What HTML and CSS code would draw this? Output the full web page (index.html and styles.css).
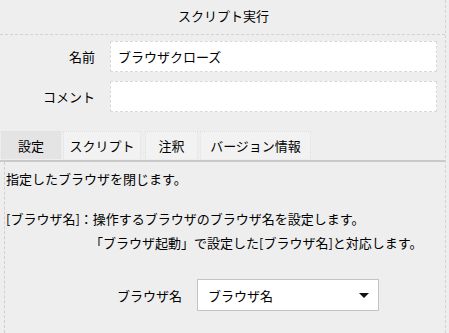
FILE: index.html
```html
<!DOCTYPE html>
<html lang="ja">
<head>
<meta charset="utf-8">
<link rel="stylesheet" href="styles.css">
</head>
<body>
<div class="frame">
  <div class="header">スクリプト実行</div>
  <div class="form">
    <div class="row">
      <label class="label">名前</label>
      <div class="input">ブラウザクローズ</div>
    </div>
    <div class="row">
      <label class="label">コメント</label>
      <div class="input"></div>
    </div>
  </div>
  <div class="tabs">
    <div class="tab active">設定</div>
    <div class="tab">スクリプト</div>
    <div class="tab">注釈</div>
    <div class="tab">バージョン情報</div>
  </div>
  <div class="panel">
    <p class="line">指定したブラウザを閉じます。</p>
    <p class="line gap">[ブラウザ名]：操作するブラウザのブラウザ名を設定します。</p>
    <p class="line indent">「ブラウザ起動」で設定した[ブラウザ名]と対応します。</p>
    <div class="field">
      <span class="field-label">ブラウザ名</span>
      <div class="select">
        <span>ブラウザ名</span>
        <span class="arrow"></span>
      </div>
    </div>
  </div>
</div>
</body>
</html>
```

FILE: styles.css
```css
html, body {
  margin: 0;
  padding: 0;
  background: #eeeeee;
}
body {
  font-family: "Noto Sans CJK JP", "Noto Sans", sans-serif;
  font-size: 13px;
  color: #000;
  width: 449px;
  height: 333px;
  overflow: hidden;
}
.frame {
  width: 446px;
  height: 333px;
  border-right: 1px dashed #d4d4d4;
  box-sizing: border-box;
  display: flex;
  flex-direction: column;
}
.header {
  height: 35px;
  box-sizing: border-box;
  border-bottom: 1px dashed #d2d2d2;
  text-align: center;
  line-height: 32px;
  padding-left: 2px;
}
.form {
  display: flex;
  flex-direction: column;
  gap: 9px;
  padding-top: 6px;
}
.row {
  display: flex;
  align-items: center;
  height: 31px;
}
.label {
  width: 95px;
  text-align: right;
  padding-right: 15px;
  box-sizing: content-box;
}
.input {
  width: 327px;
  height: 31px;
  box-sizing: border-box;
  background: #fff;
  border: 1px dashed #d8d8d8;
  padding-left: 7px;
  line-height: 29px;
}
.tabs {
  display: flex;
  gap: 2px;
  margin-top: 19px;
  height: 29px;
  border-bottom: 2px solid #c9c9c9;
  padding-left: 1px;
}
.tab {
  height: 28px;
  line-height: 28px;
  background: #f2f2f2;
  border: 1px dotted #e0e0e0;
  border-bottom: none;
  box-sizing: border-box;
  text-align: center;
}
.tab.active {
  background: #e4e4e4;
  width: 60px;
}
.tab:nth-child(2) { width: 78px; }
.tab:nth-child(3) { width: 53px; margin-left: 2px; }
.tab:nth-child(4) { width: 111px; }
.panel {
  flex: 1;
  margin-left: 4px;
  border-left: 1px dashed #cfcfcf;
  padding-left: 1px;
  padding-top: 7px;
}
.line {
  margin: 0;
  line-height: 20px;
}
.gap {
  margin-top: 20px;
}
.indent {
  margin-top: 4px;
  padding-left: 84px;
}
.field {
  display: flex;
  align-items: center;
  margin-top: 26px;
}
.field-label {
  width: 176px;
  text-align: right;
  padding-right: 15px;
}
.select {
  width: 182px;
  height: 32px;
  box-sizing: border-box;
  background: #fff;
  border: 1px solid #c4c4c4;
  display: flex;
  align-items: center;
  justify-content: space-between;
  padding: 0 9px 0 10px;
}
.arrow {
  width: 0;
  height: 0;
  border-left: 5px solid transparent;
  border-right: 5px solid transparent;
  border-top: 5px solid #111;
}
```
